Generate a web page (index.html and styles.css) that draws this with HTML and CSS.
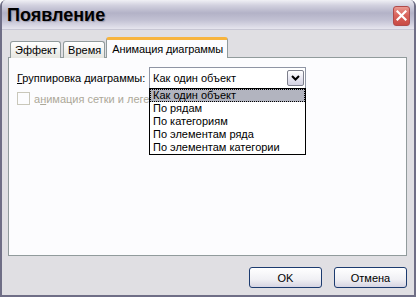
FILE: index.html
```html
<!DOCTYPE html>
<html>
<head>
    <meta charset="utf-8"/>
    <link rel="stylesheet" href="styles.css">
</head>
<body>
<div class="window">
    <div class="titlebar">
        <span class="caption">Появление</span>
        <div class="close">
            <svg width="11" height="11" viewBox="0 0 11 11">
                <path d="M1.5 1.5 L9.5 9.5 M9.5 1.5 L1.5 9.5" stroke="#fff" stroke-width="2.2" stroke-linecap="square"/>
            </svg>
        </div>
    </div>
    <div class="client">
        <div class="tabs">
            <div class="tab">Эффект</div>
            <div class="tab">Время</div>
            <div class="tab active">Анимация диаграммы</div>
        </div>
        <div class="panel">
            <div class="row">
                <span class="label"><u>Г</u>руппировка диаграммы:</span>
                <div class="combo">
                    <div class="combo-field">
                        <span>Как один объект</span>
                        <div class="combo-btn">
                            <svg width="9" height="6" viewBox="0 0 9 6">
                                <path d="M1 1 L4.5 4.5 L8 1" stroke="#000" stroke-width="2" fill="none"/>
                            </svg>
                        </div>
                    </div>
                    <div class="combo-list">
                        <div class="item selected">Как один объект</div>
                        <div class="item">По рядам</div>
                        <div class="item">По категориям</div>
                        <div class="item">По элементам ряда</div>
                        <div class="item">По элементам категории</div>
                    </div>
                </div>
            </div>
            <div class="check-row">
                <span class="checkbox"></span>
                <span class="disabled">а<u>н</u>имация сетки и легенды</span>
            </div>
        </div>
        <div class="buttons">
            <div class="button">OK</div>
            <div class="button">Отмена</div>
        </div>
    </div>
</div>
</body>
</html>
```

FILE: styles.css
```css
body {
    margin: 0;
    font-family: 'Liberation Sans', Arial, sans-serif;
    font-size: 11px;
    color: #000;
}

.window {
    width: 416px;
    height: 297px;
    box-sizing: border-box;
    background: #e0dfe3;
    border: 2px solid #6f6e86;
    border-top: none;
    border-radius: 6px 6px 0 0;
    overflow: hidden;
}

.titlebar {
    height: 29px;
    display: flex;
    align-items: center;
    justify-content: space-between;
    padding: 0 5px 0 5px;
    margin: 0 -2px;
    background: linear-gradient(to bottom, #f0f0f5 0, #d2d1df 18%, #b3b2c7 45%, #c3c2d4 70%, #e6e5ee 100%);
    border-bottom: 1px solid #c8c7d4;
}

.titlebar .caption {
    font-size: 18px;
    font-weight: bold;
    color: #000;
    text-shadow: 1px 1px 1px rgba(60, 60, 80, 0.35);
    margin: 1px 0 0 2px;
}

.titlebar .close {
    width: 17px;
    height: 20px;
    margin: 2px 1px 0 0;
    box-sizing: border-box;
    border: 1px solid #b04a4a;
    border-radius: 3px;
    background: linear-gradient(to bottom, #ea9a92 0, #d9645c 45%, #c94a44 100%);
    display: flex;
    align-items: center;
    justify-content: center;
}

.client {
    padding: 8px 7px 0 6px;
}

.tabs {
    display: flex;
    align-items: flex-end;
    padding-left: 2px;
    height: 20px;
    position: relative;
    z-index: 1;
    margin-bottom: -1px;
}

.tab {
    height: 17px;
    box-sizing: border-box;
    padding: 2px 3px 0 4px;
    margin-right: 2px;
    border: 1px solid #919b9c;
    border-bottom: none;
    border-radius: 3px 3px 0 0;
    background: linear-gradient(to bottom, #ffffff 0, #f3f3f0 50%, #e6e6e0 100%);
    white-space: nowrap;
}

.tab.active {
    height: 21px;
    margin-right: 0;
    margin-left: -1px;
    padding: 3px 4px 0 5px;
    background: #fcfcfe;
    border-top: 3px solid #f7b43d;
    letter-spacing: -0.1px;
}

.panel {
    height: 199px;
    box-sizing: border-box;
    background: #fcfcfe;
    border: 1px solid #919b9c;
    padding: 9px 0 0 8px;
}

.row {
    display: flex;
    align-items: flex-start;
    height: 22px;
}

.label {
    margin-top: 5px;
    width: 132px;
}

.combo {
    position: relative;
    width: 157px;
}

.combo-field {
    height: 22px;
    box-sizing: border-box;
    border: 1px solid #8f95a4;
    background: #fff;
    display: flex;
    align-items: center;
    justify-content: space-between;
    padding: 0 1px 0 3px;
}

.combo-btn {
    width: 17px;
    height: 16px;
    box-sizing: border-box;
    border: 1px solid #7d7f8c;
    border-radius: 2px;
    background: linear-gradient(to bottom, #ffffff 0, #e9e8f2 50%, #d3d2e2 100%);
    display: flex;
    align-items: center;
    justify-content: center;
}

.combo-list {
    position: absolute;
    left: 0;
    top: 21px;
    width: 157px;
    box-sizing: border-box;
    border: 1px solid #000;
    background: #fff;
    z-index: 2;
}

.item {
    height: 13px;
    line-height: 13px;
    padding-left: 3px;
}

.item.selected {
    background: #b2b4bf;
    outline: 1px dotted #000;
    outline-offset: -1px;
}

.check-row {
    display: flex;
    align-items: center;
    margin-top: 3px;
}

.checkbox {
    width: 13px;
    height: 13px;
    box-sizing: border-box;
    border: 1px solid #c9c7ba;
    background: #fcfcfe;
    margin-right: 4px;
}

.disabled {
    color: #aca899;
}

.buttons {
    display: flex;
    justify-content: flex-end;
    gap: 12px;
    margin-top: 11px;
}

.button {
    width: 73px;
    height: 21px;
    box-sizing: border-box;
    border: 1px solid #1c3b6f;
    border-radius: 3px;
    background: linear-gradient(to bottom, #ffffff 0, #f0f0f4 60%, #d6d4e2 100%);
    display: flex;
    align-items: center;
    justify-content: center;
}
```
